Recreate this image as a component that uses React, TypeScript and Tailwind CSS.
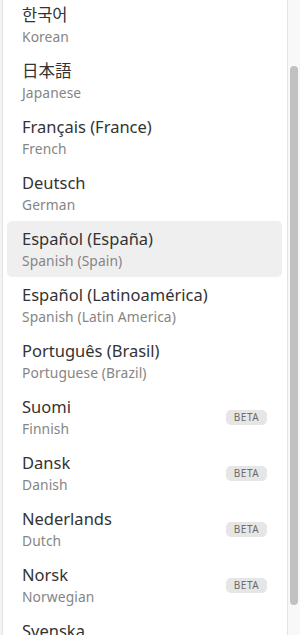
import React from 'react';

type Lang = { name: string; sub: string; beta?: boolean; active?: boolean };

const languages: Lang[] = [
  { name: '한국어', sub: 'Korean' },
  { name: '日本語', sub: 'Japanese' },
  { name: 'Français (France)', sub: 'French' },
  { name: 'Deutsch', sub: 'German' },
  { name: 'Español (España)', sub: 'Spanish (Spain)', active: true },
  { name: 'Español (Latinoamérica)', sub: 'Spanish (Latin America)' },
  { name: 'Português (Brasil)', sub: 'Portuguese (Brazil)' },
  { name: 'Suomi', sub: 'Finnish', beta: true },
  { name: 'Dansk', sub: 'Danish', beta: true },
  { name: 'Nederlands', sub: 'Dutch', beta: true },
  { name: 'Norsk', sub: 'Norwegian', beta: true },
  { name: 'Svenska', sub: 'Swedish' },
];

const App: React.FC = () => {
  return (
    <div
      className="flex h-[635px] w-[300px] overflow-hidden bg-white"
      style={{ fontFamily: '"Noto Sans", "Noto Sans CJK KR", "Noto Sans CJK JP", sans-serif' }}
    >
      {/* left edge */}
      <div className="w-[2px] bg-[#f3f3f3]" />

      {/* list */}
      <div className="flex-1 overflow-hidden border-l border-[#e3e3e3]">
        <ul className="-mt-[3px] pl-[4px] pr-[5px]">
          {languages.map((lang) => (
            <li
              key={lang.name}
              className={`flex h-[56px] items-center justify-between rounded-[5px] px-[15px] ${
                lang.active ? 'bg-[#efefef]' : ''
              }`}
            >
              <div className="flex flex-col pt-[1px]">
                <span className="text-[16.5px] leading-[22px] text-[#333333]">{lang.name}</span>
                <span className="mt-[1px] text-[13.8px] leading-[20px] tracking-[0.1px] text-[#858585]">
                  {lang.sub}
                </span>
              </div>
              {lang.beta && (
                <span className="flex h-[15px] w-[41px] items-center justify-center rounded-[5px] bg-[#e6e6e6] text-[10px] tracking-[0.5px] text-[#6b6b6b]">
                  BETA
                </span>
              )}
            </li>
          ))}
        </ul>
      </div>

      {/* scrollbar */}
      <div className="w-[13px] border-l border-[#e3e3e3] bg-[#f8f8f8] pl-[2px] pt-[66px]">
        <div className="h-[539px] w-[8px] rounded-full bg-[#c1c1c1]" />
      </div>
    </div>
  );
};

export default App;
